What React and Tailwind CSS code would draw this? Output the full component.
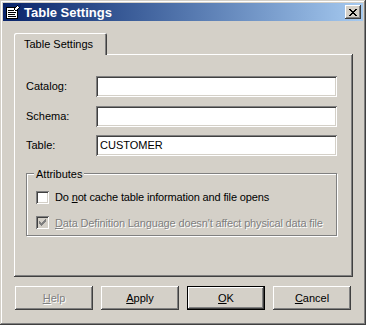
import React from 'react';

// Win2k style 3D edges
const raised = 'shadow-[inset_-1px_-1px_#404040,inset_1px_1px_#fff,inset_-2px_-2px_#808080,inset_2px_2px_#d4d0c8]';
const sunken = 'shadow-[inset_1px_1px_#808080,inset_-1px_-1px_#fff,inset_2px_2px_#404040,inset_-2px_-2px_#d4d0c8]';
const disabledText = 'text-[#808080] [text-shadow:1px_1px_0_#fff]';

const AppIcon = () => (
  <svg width="16" height="16" viewBox="0 0 16 16" shapeRendering="crispEdges">
    <rect x="1.5" y="3.5" width="11" height="11" fill="#fff" stroke="#000" />
    <rect x="3" y="6" width="6" height="1" fill="#000" />
    <rect x="3" y="8" width="8" height="1" fill="#000" />
    <rect x="3" y="10" width="7" height="1" fill="#000" />
    <rect x="3" y="12" width="8" height="1" fill="#000" />
    <path d="M9 5 L13 1 L15 3 L11 7 Z" fill="#fff" stroke="#000" />
    <rect x="13" y="0" width="3" height="3" fill="#0a246a" />
  </svg>
);

const CloseGlyph = () => (
  <svg width="8" height="7" viewBox="0 0 8 7" shapeRendering="crispEdges">
    <path
      fill="#000"
      d="M0 0h2v1H0zM6 0h2v1H6zM1 1h2v1H1zM5 1h2v1H5zM2 2h4v1H2zM3 3h2v1H3zM2 4h4v1H2zM1 5h2v1H1zM5 5h2v1H5zM0 6h2v1H0zM6 6h2v1H6z"
    />
  </svg>
);

const CheckGlyph = ({ color }) => (
  <svg width="7" height="7" viewBox="0 0 7 7" shapeRendering="crispEdges">
    <path
      fill={color}
      d="M6 0h1v1H6zM5 1h2v1H5zM0 2h1v1H0zM4 2h3v1H4zM0 3h2v1H0zM3 3h3v1H3zM0 4h5v1H0zM1 5h3v1H1zM2 6h1v1H2z"
    />
  </svg>
);

const Field = ({ label, value, className }) => (
  <div className={`flex items-center h-[21px] ${className || ''}`}>
    <span className="w-[70px]">{label}</span>
    <div className={`w-[241px] h-[21px] bg-white ${sunken} flex items-center pl-[4px]`}>
      {value}
    </div>
  </div>
);

const Checkbox = ({ checked, disabled, children, className }) => (
  <div className={`flex items-center gap-[6px] ${className || ''}`}>
    <div
      className={`w-[13px] h-[13px] flex items-center justify-center ${sunken} ${
        disabled ? 'bg-[#d4d0c8]' : 'bg-white'
      }`}
    >
      {checked && <CheckGlyph color={disabled ? '#808080' : '#000'} />}
    </div>
    <span className={`tracking-[-0.15px] ${disabled ? disabledText : ''}`}>{children}</span>
  </div>
);

const Button = ({ children, disabled, isDefault }) => (
  <button
    className={`w-[78px] h-[24px] bg-[#d4d0c8] flex items-center justify-center ${
      isDefault
        ? 'border border-black shadow-[inset_-1px_-1px_#404040,inset_1px_1px_#fff,inset_-2px_-2px_#808080]'
        : raised
    } ${disabled ? disabledText : 'text-black'}`}
  >
    {children}
  </button>
);

export default function App() {
  return (
    <div
      className={`w-[366px] h-[325px] bg-[#d4d0c8] p-[3px] flex flex-col text-[11px] text-black font-['Liberation_Sans',Arial,sans-serif] shadow-[inset_-1px_-1px_#404040,inset_1px_1px_#d4d0c8,inset_-2px_-2px_#808080,inset_2px_2px_#fff]`}
    >
      {/* title bar */}
      <div className="h-[18px] flex items-center bg-linear-to-r from-[#0a246a] to-[#a6caf0]">
        <div className="ml-[2px] w-[16px] h-[16px]">
          <AppIcon />
        </div>
        <span className="ml-[3px] text-white font-bold text-[13px] leading-none">Table Settings</span>
        <div className={`ml-auto mr-[2px] w-[16px] h-[14px] bg-[#d4d0c8] flex items-center justify-center ${raised}`}>
          <CloseGlyph />
        </div>
      </div>

      {/* tab strip */}
      <div className="mt-[12px] ml-[11px] flex">
        <div className="relative z-10 w-[93px] h-[22px] bg-[#d4d0c8] rounded-t-[2px] pl-[10px] flex items-center shadow-[inset_1px_1px_#fff,inset_-1px_0_#404040,inset_-2px_0_#808080]">
          Table Settings
        </div>
      </div>

      {/* panel */}
      <div className="ml-[11px] -mt-px w-[339px] h-[223px] pl-[12px] pt-[22px] shadow-[inset_-1px_-1px_#404040,inset_1px_1px_#fff,inset_-2px_-2px_#808080]">
        <Field label="Catalog:" />
        <Field label="Schema:" className="mt-[9px]" />
        <Field label="Table:" value="CUSTOMER" className="mt-[8px]" />

        <div className="relative mt-[17px] w-[311px] h-[63px] border border-[#808080] shadow-[inset_1px_1px_#fff,1px_1px_#fff] pl-[9px] pt-[15px]">
          <span className="absolute -top-[8px] left-[7px] px-[2px] bg-[#d4d0c8]">Attributes</span>
          <Checkbox>
            Do <u>n</u>ot cache table information and file opens
          </Checkbox>
          <Checkbox checked disabled className="mt-[9px]">
            <u>D</u>ata Definition Language doesn't affect physical data file
          </Checkbox>
        </div>
      </div>

      {/* buttons */}
      <div className="mt-[9px] ml-[12px] flex gap-[8px]">
        <Button disabled>
          <u>H</u>elp
        </Button>
        <Button>
          <u>A</u>pply
        </Button>
        <Button isDefault>
          <u>O</u>K
        </Button>
        <Button>
          <u>C</u>ancel
        </Button>
      </div>
    </div>
  );
}
